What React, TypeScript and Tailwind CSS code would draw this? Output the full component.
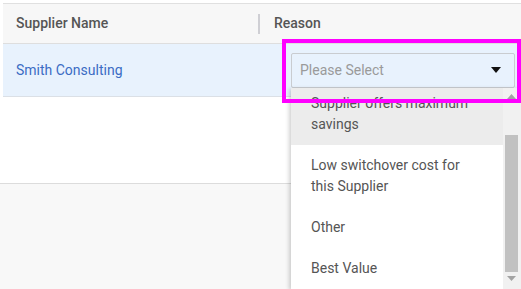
const reasons = [
  "Supplier offers maximum savings",
  "Low switchover cost for this Supplier",
  "Other",
  "Best Value",
];

export default function App() {
  return (
    <div className="relative h-[289px] w-[521px] overflow-hidden bg-white font-['Roboto',sans-serif] text-[14px]">
      <div className="flex h-full flex-col pt-[3px]">
        <div className="ml-[3px] border-t border-[#e0e0e0]">
          <div className="flex h-[40px] items-center border-b border-[#dedede] bg-[#f7f7f7] font-medium text-[#555]">
            <div className="w-[255px] pl-[13px]">Supplier Name</div>
            <div className="h-[20px] w-[2px] bg-[#cfcfd4]" />
            <div className="pl-[14px]">Reason</div>
          </div>
          <div className="flex h-[53px] items-center border-b border-[#dbe0e6] bg-[#e8f2fd]">
            <div className="w-[288px] pl-[13px] text-[#3b6cc4]">Smith Consulting</div>
            <div className="flex h-[35px] w-[224px] items-center justify-between rounded-[2px] border border-[#c9ccd0] pl-[8px] pr-[13px] text-[#9a9a9a]">
              <span>Please Select</span>
              <svg width="10" height="6" viewBox="0 0 10 6">
                <path d="M0 0h10L5 6z" fill="#111" />
              </svg>
            </div>
          </div>
        </div>
        <div className="h-[86px] bg-white" />
        <div className="flex-1 border-t border-[#dcdcdc] bg-[#f8f8f8]" />
      </div>

      <div className="absolute left-[291px] top-[88px] h-[201px] w-[230px] overflow-hidden bg-white shadow-[-2px_1px_4px_rgba(0,0,0,0.18)]">
        <div className="-mt-[5px] w-[212px] text-[#555]">
          {reasons.map((r, i) => (
            <div key={r} className={`px-[20px] py-[10px] leading-[21px] ${i === 0 ? "bg-[#ececec]" : "bg-white"}`}>
              {r}
            </div>
          ))}
        </div>
        <div className="absolute right-0 top-0 h-full w-[18px] bg-[#f1f1f1]">
          <svg className="absolute left-[4px] top-[6px]" width="9" height="5" viewBox="0 0 9 5">
            <path d="M0 5h9L4.5 0z" fill="#a3a3a3" />
          </svg>
          <div className="absolute left-[2px] top-[47px] h-[137px] w-[13px] bg-[#c1c1c1]" />
          <svg className="absolute left-[4px] top-[188px]" width="9" height="5" viewBox="0 0 9 5">
            <path d="M0 0h9L4.5 5z" fill="#a3a3a3" />
          </svg>
        </div>
      </div>

      <div className="absolute left-[282px] top-[39px] h-[64px] w-[239px] border-4 border-[#ff00ff]" />
    </div>
  );
}
